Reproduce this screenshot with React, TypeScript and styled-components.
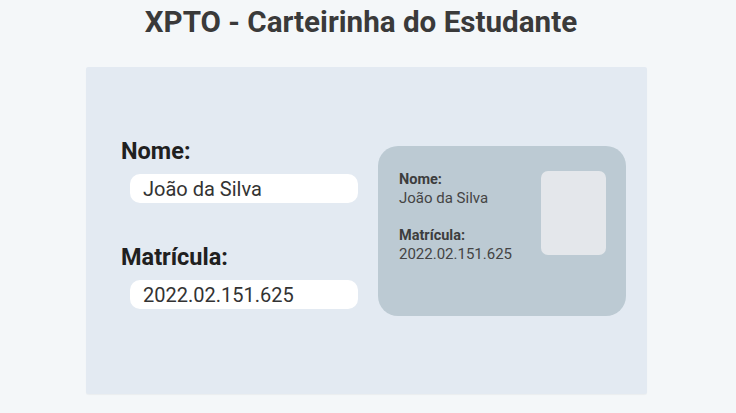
import React from "react";
import styled, { createGlobalStyle } from "styled-components";

const Global = createGlobalStyle`
  html, body { margin: 0; padding: 0; background: #f4f7f9; }
  body { font-family: Roboto, "Liberation Sans", Arial, sans-serif; }
  * { box-sizing: border-box; }
`;

const Page = styled.div`
  width: 736px;
  height: 413px;
  overflow: hidden;
  display: flex;
  flex-direction: column;
`;

const Title = styled.h1`
  margin: 5px 0 0 0;
  padding-right: 14px;
  text-align: center;
  font-size: 29.6px;
  line-height: 35px;
  font-weight: 700;
  color: #3a3a3a;
`;

const Panel = styled.section`
  margin: 27px 0 0 86px;
  width: 561px;
  height: 327px;
  background: #e3eaf2;
  border-radius: 2px;
  box-shadow: 0 1px 1px rgba(0, 0, 0, 0.04);
  display: flex;
  align-items: center;
  padding: 0 21px 0 35px;
`;

const Form = styled.div`
  display: flex;
  flex-direction: column;
  padding-bottom: 15px;
  margin-right: 20px;
`;

const FieldLabel = styled.div<{ $gapTop?: number }>`
  margin-top: ${(p) => p.$gapTop ?? 0}px;
  font-size: 23.5px;
  line-height: 28px;
  font-weight: 700;
  color: #202020;
`;

const Field = styled.div`
  margin: 9px 0 0 9px;
  width: 228px;
  height: 29px;
  background: #ffffff;
  border-radius: 10px;
  padding-left: 13px;
  display: flex;
  align-items: center;
  font-size: 20px;
  color: #333333;
`;

const Card = styled.div`
  width: 248px;
  height: 170px;
  background: #bccad3;
  border-radius: 20px;
  display: flex;
  justify-content: space-between;
  padding: 25px 20px 0 21px;
`;

const CardInfo = styled.div`
  display: flex;
  flex-direction: column;
`;

const CardLabel = styled.div<{ $gapTop?: number }>`
  margin-top: ${(p) => p.$gapTop ?? 0}px;
  font-size: 14.5px;
  line-height: 17px;
  font-weight: 700;
  color: #3d3d3d;
`;

const CardValue = styled.div`
  margin-top: 1px;
  font-size: 15px;
  line-height: 18px;
  color: #444444;
`;

const Photo = styled.div`
  width: 65px;
  height: 84px;
  background: #e4e7eb;
  border-radius: 7px;
`;

export default function App() {
  const nome = "João da Silva";
  const matricula = "2022.02.151.625";
  return (
    <Page>
      <Global />
      <Title>XPTO - Carteirinha do Estudante</Title>
      <Panel>
        <Form>
          <FieldLabel>Nome:</FieldLabel>
          <Field>{nome}</Field>
          <FieldLabel $gapTop={40}>Matrícula:</FieldLabel>
          <Field>{matricula}</Field>
        </Form>
        <Card>
          <CardInfo>
            <CardLabel>Nome:</CardLabel>
            <CardValue>{nome}</CardValue>
            <CardLabel $gapTop={20}>Matrícula:</CardLabel>
            <CardValue>{matricula}</CardValue>
          </CardInfo>
          <Photo />
        </Card>
      </Panel>
    </Page>
  );
}
